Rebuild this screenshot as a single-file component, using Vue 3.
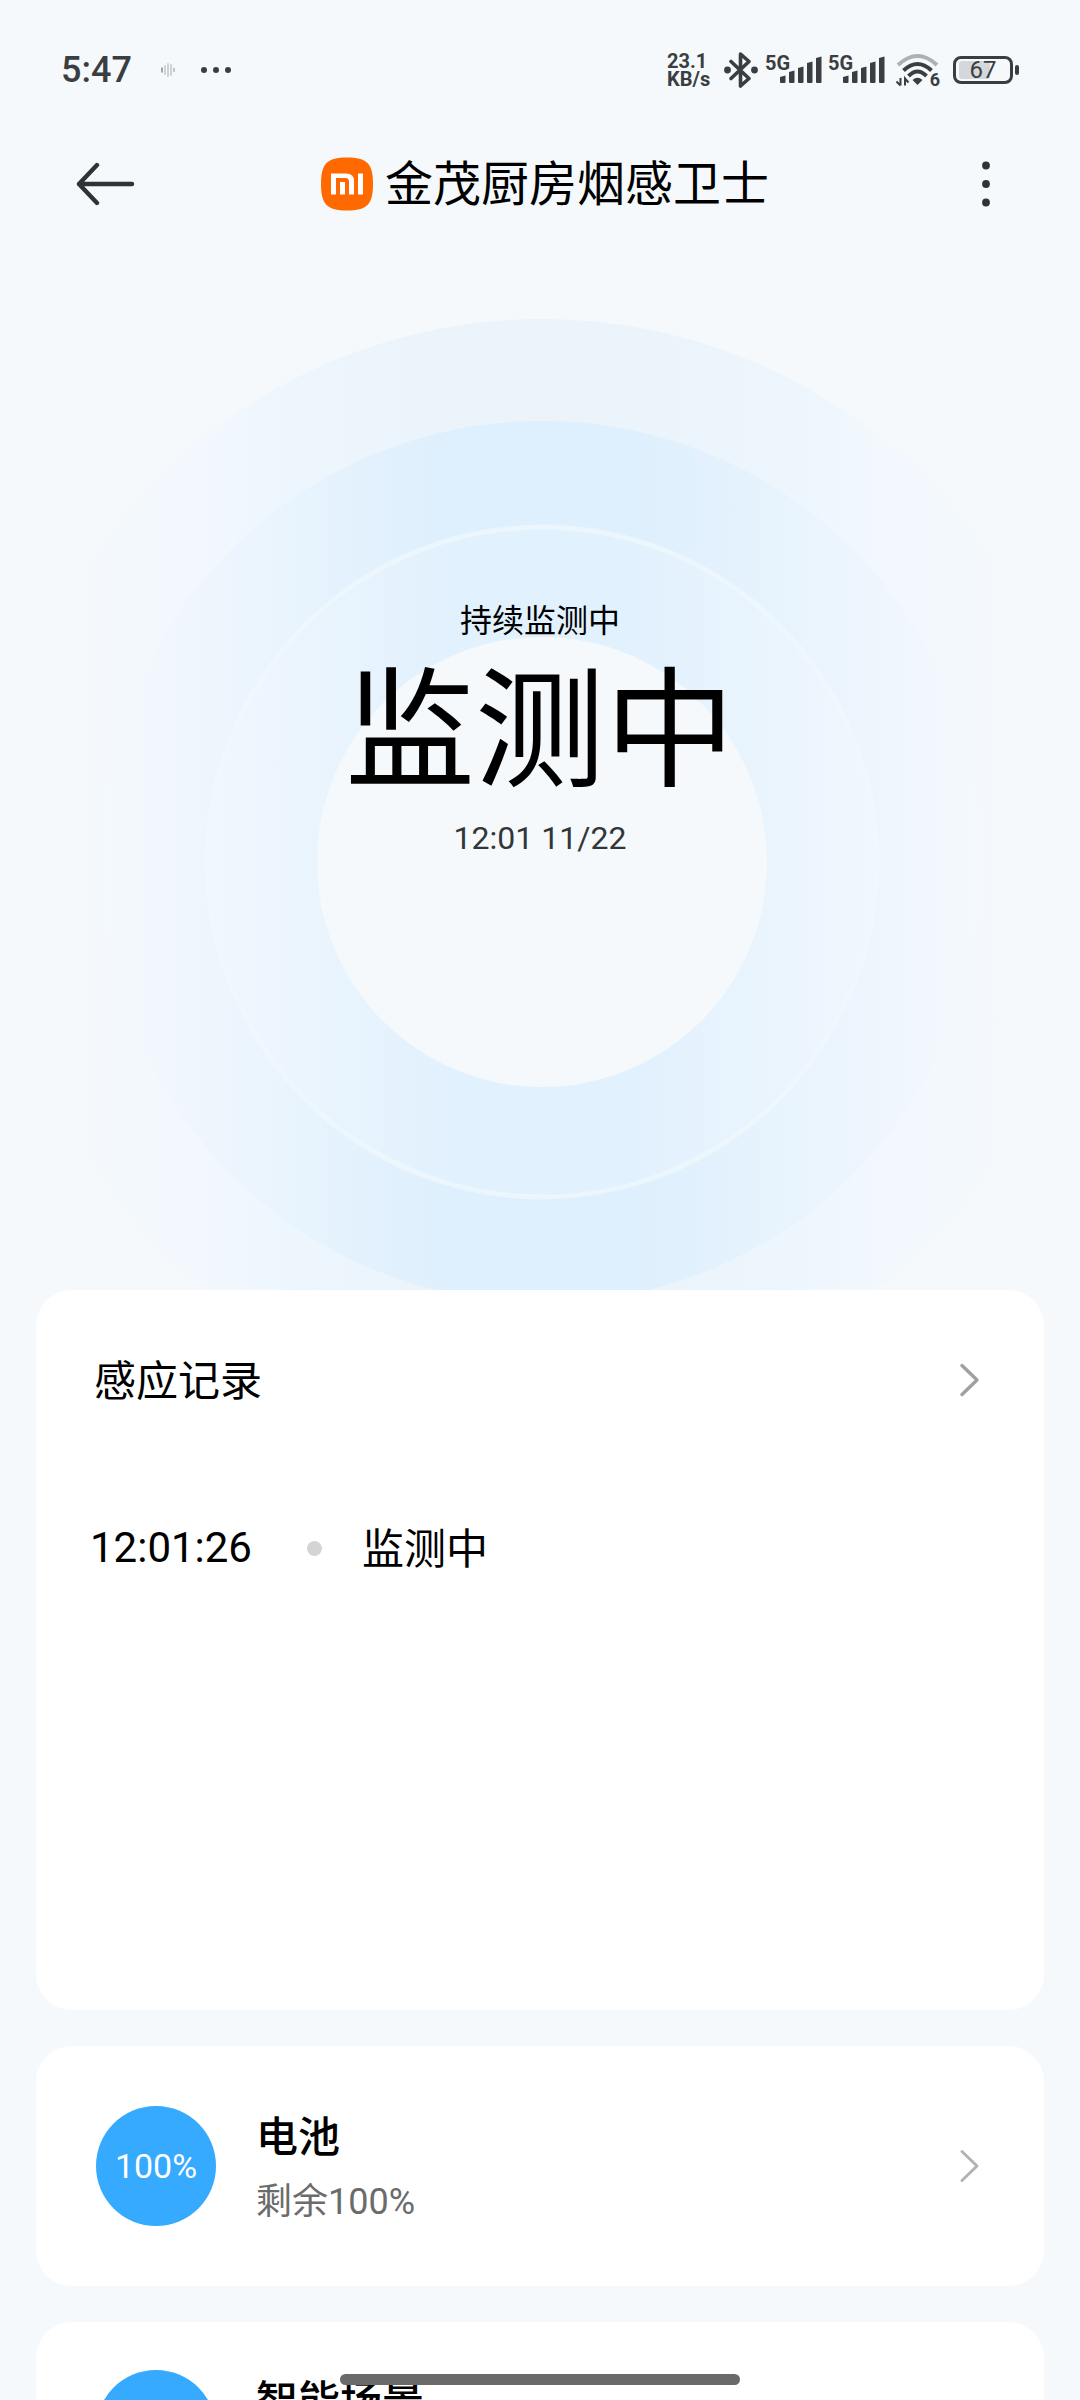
<script setup>
import { ref } from 'vue'

const status = ref({ time: '5:47', rate: '23.1', unit: 'KB/s', battery: 67 })
const bars = [
  { x: 0, h: 7 },
  { x: 9, h: 12 },
  { x: 18, h: 16 },
  { x: 27, h: 21 },
  { x: 36, h: 26 },
]
const logs = ref([{ time: '12:01:26', text: '监测中' }])
</script>

<template>
  <div class="screen">
    <div class="status">
      <div class="status-left">
        <span class="clock">{{ status.time }}</span>
        <svg class="voice" width="14" height="14" viewBox="0 0 14 14" fill="none" stroke-linecap="round">
          <path d="M1 5v4" stroke="#8d9194" stroke-width="1.6" />
          <path d="M4 3v8M7 1v12M10 2v10" stroke="#cdd2d5" stroke-width="2" />
          <path d="M13 5.5v3" stroke="#b5babd" stroke-width="1.6" />
        </svg>
        <svg width="30" height="8" viewBox="0 0 30 8" fill="#3a3e41">
          <circle cx="3" cy="4" r="3" /><circle cx="15" cy="4" r="3" /><circle cx="27" cy="4" r="3" />
        </svg>
      </div>
      <div class="status-right">
        <div class="rate"><span>{{ status.rate }}</span><span>{{ status.unit }}</span></div>
        <svg class="bt" width="34" height="36" viewBox="0 0 34 36" fill="none" stroke="#3a3e41" stroke-width="3.6" stroke-linejoin="round" stroke-linecap="round">
          <path d="M7 9.500L25 26.500L16.500 34V2L25 9.500L7 26.500" />
          <circle cx="3.500" cy="18" r="1.600" fill="#3a3e41" />
          <circle cx="30.500" cy="18" r="1.600" fill="#3a3e41" />
        </svg>
        <div v-for="n in 2" :key="n" class="signal">
          <span class="net">5G</span>
          <svg width="42" height="27" viewBox="0 0 42 27" fill="#3a3e41">
            <path v-for="b in bars" :key="b.x" :d="`M${b.x} 26V${28 - b.h}L${b.x + 5.500} ${26 - b.h + 0.500}V26Q${b.x + 5.500} 27 ${b.x + 4.500} 27H${b.x + 1}Q${b.x} 27 ${b.x} 26Z`" />
          </svg>
        </div>
        <div class="wifi">
          <svg width="44" height="34" viewBox="0 0 44 34" fill="none" stroke="#3a3e41" stroke-width="4">
            <path d="M2 12Q21.500 -6 41 12" stroke="#adb1b4" />
            <path d="M7.500 17.500Q21.500 4.500 35.500 17.500" />
            <path d="M12.500 23Q21.500 14 30.500 23" />
            <path d="M16.500 27Q21.500 22.500 26.500 27L21.500 32Z" fill="#3a3e41" stroke="none" />
            <path d="M4.500 25v7.500M0.500 28.500l4 4M9 32.500V25.500l3.500 4" stroke-width="2" />
          </svg>
          <span class="gen">6</span>
        </div>
        <div class="battery">
          <div class="cell">
            <i class="level"></i>
            <span>{{ status.battery }}</span>
          </div>
          <i class="nub"></i>
        </div>
      </div>
    </div>

    <header class="bar">
      <button class="icon-btn" aria-label="返回">
        <svg width="60" height="44" viewBox="0 0 60 44" fill="none" stroke="#2f3335" stroke-width="4.400" stroke-linecap="round" stroke-linejoin="round">
          <path d="M22 3L4 22L22 41M4 22H57" />
        </svg>
      </button>
      <h1 class="title">
        <svg width="52" height="54" viewBox="0 0 52 54">
          <path d="M26 0.500C46 0.500 52 6.500 52 27S46 53.500 26 53.500S0 47.500 0 27S6 0.500 26 0.500Z" fill="#ff6900" />
          <g fill="#fff">
            <path d="M10 16.500H25Q33 16.500 33 24V37.500H28V24.500Q28 21 24.500 21H15V37.500H10Z" />
            <path d="M19 25H24V37.500H19ZM37 16.500H42V37.500H37Z" />
          </g>
        </svg>
        <span class="name">金茂厨房烟感卫士</span>
      </h1>
      <button class="icon-btn" aria-label="更多">
        <svg width="60" height="46" viewBox="0 0 60 46" fill="#2f3335">
          <circle cx="41" cy="4.500" r="3.900" /><circle cx="41" cy="23" r="3.900" /><circle cx="41" cy="41.500" r="3.900" />
        </svg>
      </button>
    </header>

    <main>
      <section class="hero">
        <svg class="rings" viewBox="0 0 1080 1062" preserveAspectRatio="xMidYMid slice" aria-hidden="true">
          <defs>
            <linearGradient id="outer" gradientUnits="userSpaceOnUse" x1="0" x2="1084" y1="0" y2="0">
              <stop offset="0.060" stop-color="#f5f9fc" />
              <stop offset="0.180" stop-color="#f2f8fe" />
              <stop offset="0.280" stop-color="#edf6fd" />
              <stop offset="0.380" stop-color="#ebf4fb" />
              <stop offset="0.620" stop-color="#ebf4fb" />
              <stop offset="0.720" stop-color="#edf6fd" />
              <stop offset="0.820" stop-color="#f2f8fe" />
              <stop offset="0.940" stop-color="#f5f9fc" />
            </linearGradient>
            <linearGradient id="middle" gradientUnits="userSpaceOnUse" x1="0" x2="1084" y1="0" y2="0">
              <stop offset="0.100" stop-color="#f4f9fd" />
              <stop offset="0.180" stop-color="#eff6fd" />
              <stop offset="0.260" stop-color="#e9f4fd" />
              <stop offset="0.350" stop-color="#e2f1fd" />
              <stop offset="0.420" stop-color="#deeffd" />
              <stop offset="0.580" stop-color="#deeffd" />
              <stop offset="0.650" stop-color="#e2f1fd" />
              <stop offset="0.740" stop-color="#e9f4fd" />
              <stop offset="0.820" stop-color="#eff6fd" />
              <stop offset="0.900" stop-color="#f4f9fd" />
            </linearGradient>
            <linearGradient id="inner" gradientUnits="userSpaceOnUse" x1="0" x2="1084" y1="0" y2="0">
              <stop offset="0.190" stop-color="#f1f7fe" />
              <stop offset="0.300" stop-color="#e9f4fd" />
              <stop offset="0.420" stop-color="#e2f1fe" />
              <stop offset="0.580" stop-color="#e2f1fe" />
              <stop offset="0.700" stop-color="#e9f4fd" />
              <stop offset="0.810" stop-color="#f1f7fe" />
            </linearGradient>
          </defs>
          <circle cx="542" cy="634" r="543" fill="url(#outer)" />
          <circle cx="542" cy="634" r="441" fill="url(#middle)" />
          <circle cx="542" cy="634" r="335" fill="url(#inner)" stroke="#f1f8fc" stroke-opacity="0.700" stroke-width="5" />
          <circle cx="542" cy="634" r="225" fill="#f5f9fc" />
        </svg>
        <p class="hint">持续监测中</p>
        <p class="state">监测中</p>
        <p class="when">12:01 11/22</p>
      </section>

      <div class="cards">
        <section class="card records">
          <a class="records-head" href="#records">
            <h2>感应记录</h2>
            <svg class="chevron" width="24" height="36" viewBox="0 0 24 36"><path d="M4 3.500L19 18L4 32.500" /></svg>
          </a>
          <ul>
            <li v-for="l in logs" :key="l.time">
              <time>{{ l.time }}</time>
              <i class="dot"></i>
              <span class="event">{{ l.text }}</span>
            </li>
          </ul>
        </section>

        <a class="card item" href="#battery">
          <span class="badge">100%</span>
          <span class="info">
            <strong>电池</strong>
            <small>剩余<span class="num">100%</span></small>
          </span>
          <svg class="chevron light" width="24" height="36" viewBox="0 0 24 36"><path d="M4 3.500L19 18L4 32.500" /></svg>
        </a>

        <a class="card item scene" href="#scene">
          <span class="badge">
            <svg width="60" height="60" viewBox="0 0 60 60" fill="none" stroke="#fff" stroke-width="3" stroke-linejoin="round">
              <path d="M30 3L54 16V44L30 57L6 44V16Z" /><circle cx="30" cy="30" r="9" />
            </svg>
          </span>
          <span class="info"><strong>智能场景</strong></span>
        </a>
      </div>
    </main>
    <div class="home-indicator"></div>
  </div>
</template>

<style>
body {
  margin: 0;
  background: #f5f9fc;
}
</style>

<style scoped>
.screen {
  height: 100vh;
  overflow: hidden;
  position: relative;
  background: #f5f9fc;
  color: #000;
  font-family: "Noto Sans CJK SC", sans-serif;
}
h1, h2, p, ul {
  margin: 0;
  padding: 0;
  font-weight: 400;
}
a {
  color: inherit;
  text-decoration: none;
}
svg {
  display: block;
  flex: none;
}
.status {
  height: 140px;
  padding: 0 61px;
  display: flex;
  align-items: center;
  justify-content: space-between;
  color: #3a3e41;
  font-family: Roboto, sans-serif;
}
.status-left,
.status-right {
  display: flex;
  align-items: center;
}
.clock {
  font-size: 36px;
  font-weight: 500;
}
.voice {
  margin: 0 26px 0 29px;
}
.rate {
  width: 48px;
  margin-right: 9px;
  display: flex;
  flex-direction: column;
  font-size: 20px;
  line-height: 18px;
  font-weight: 700;
}
.bt {
  margin-right: 7px;
}
.signal {
  height: 30px;
  width: 56px;
  margin-right: 7px;
  display: flex;
  align-items: flex-end;
}
.net {
  align-self: flex-start;
  width: 15px;
  font-size: 20px;
  line-height: 16px;
  font-weight: 700;
}
.signal svg {
  margin-bottom: 2px;
}
.wifi {
  position: relative;
  margin: 0 13px 0 5px;
}
.gen {
  position: absolute;
  right: 0;
  bottom: -1px;
  font-size: 18px;
  line-height: 16px;
  font-weight: 700;
}
.battery {
  display: flex;
  align-items: center;
  gap: 2px;
}
.cell {
  box-sizing: border-box;
  width: 60px;
  height: 28px;
  position: relative;
  border: 3px solid #3a3e41;
  border-radius: 8px;
  font-size: 24px;
  line-height: 22px;
  text-align: center;
}
.cell span {
  position: relative;
}
.level {
  position: absolute;
  left: 3px;
  top: 2px;
  bottom: 2px;
  width: 31px;
  border-radius: 3px;
  background: #d4d8dc;
}
.nub {
  width: 4px;
  height: 10px;
  border-radius: 2px;
  background: #3a3e41;
}
.bar {
  height: 88px;
  padding: 0 75px;
  display: flex;
  align-items: center;
  justify-content: space-between;
}
.icon-btn {
  padding: 0;
  border: 0;
  background: none;
}
.title {
  display: flex;
  align-items: center;
  gap: 12px;
  padding-left: 10px;
  font-size: 48px;
  line-height: 64px;
}
.name {
  padding-bottom: 8px;
}
.hero {
  position: relative;
  box-sizing: border-box;
  height: 1062px;
  padding-top: 366px;
  overflow: hidden;
  text-align: center;
}
.rings {
  position: absolute;
  inset: 0;
  width: 100%;
  height: 100%;
}
.hero p {
  position: relative;
}
.hint {
  font-size: 32px;
  line-height: 48px;
}
.state {
  font-size: 130px;
  line-height: 154px;
}
.when {
  margin-top: 18px;
  color: #333638;
  font-family: Roboto, sans-serif;
  font-size: 32px;
  line-height: 48px;
}
.cards {
  padding: 0 36px;
  display: flex;
  flex-direction: column;
  gap: 36px;
}
.card {
  box-sizing: border-box;
  border-radius: 36px;
  background: #fff;
}
.records {
  min-height: 720px;
  padding: 60px 62px 60px 54px;
}
.records-head {
  display: flex;
  align-items: center;
  justify-content: space-between;
  padding-left: 4px;
}
.records h2,
.records li {
  font-size: 42px;
  line-height: 56px;
}
.records h2,
.event {
  padding-bottom: 4px;
}
.records ul {
  margin-top: 108px;
  list-style: none;
}
.records li {
  display: flex;
  align-items: center;
}
time,
.num {
  font-family: Roboto, sans-serif;
}
.dot {
  width: 15px;
  height: 15px;
  margin: 0 40px 0 55px;
  border-radius: 50%;
  background: #d4d4d4;
}
.chevron {
  fill: none;
  stroke: #a0a0a0;
  stroke-width: 3.4;
  stroke-linecap: round;
  stroke-linejoin: round;
}
.chevron.light {
  stroke: #b3b3b3;
  stroke-width: 3;
}
.item {
  display: flex;
  align-items: center;
  padding: 60px 62px 60px 60px;
}
.item.scene {
  padding-top: 48px;
}
.badge {
  width: 120px;
  height: 120px;
  flex: none;
  display: flex;
  align-items: center;
  justify-content: center;
  border-radius: 50%;
  background: #35aaff;
  color: #fff;
  font-family: Roboto, sans-serif;
  font-size: 34px;
}
.info {
  flex: 1;
  height: 120px;
  padding-left: 40px;
  display: flex;
  flex-direction: column;
}
.info strong {
  font-size: 42px;
  line-height: 56px;
  font-weight: 500;
}
.info small {
  margin-top: 8px;
  color: #6b6b6b;
  font-size: 36px;
  line-height: 56px;
}
.home-indicator {
  position: absolute;
  left: 50%;
  bottom: 15px;
  width: 400px;
  height: 11px;
  margin-left: -200px;
  border-radius: 6px;
  background: #6a6a6a;
}
</style>
